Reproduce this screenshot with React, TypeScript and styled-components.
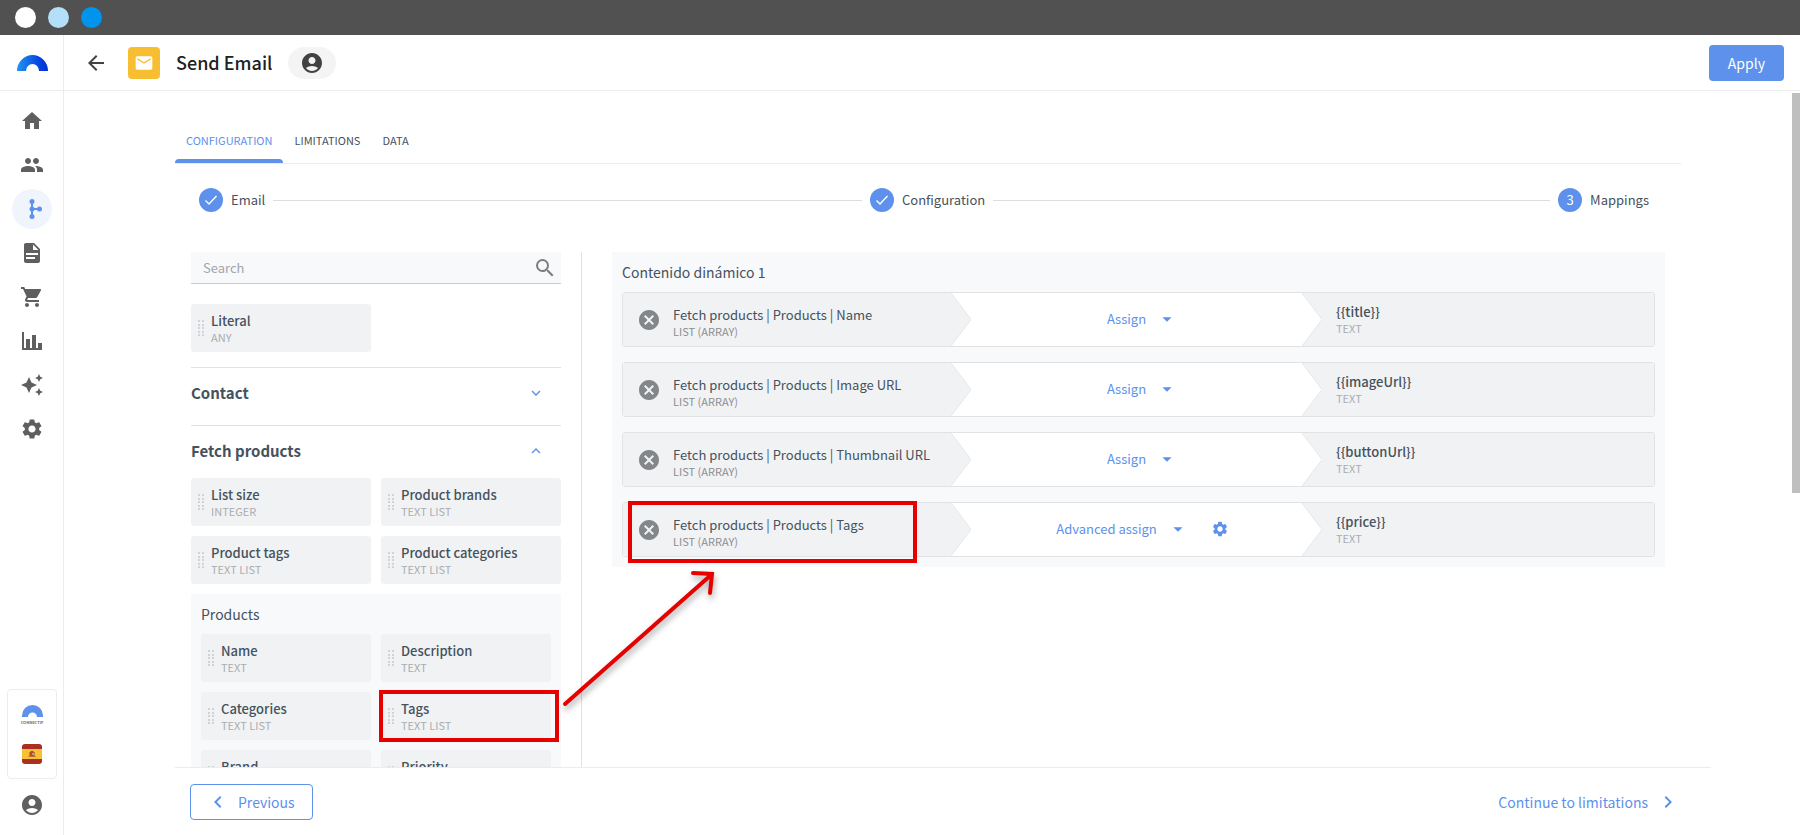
import React from "react";
import styled, { createGlobalStyle } from "styled-components";
import {
  MdAccountCircle,
  MdArrowBack,
  MdArrowDropDown,
  MdCancel,
  MdChevronLeft,
  MdChevronRight,
  MdEmail,
  MdExpandLess,
  MdExpandMore,
  MdGroup,
  MdSearch,
  MdSettings,
  MdShoppingCart,
} from "react-icons/md";

const color = {
  blue: "#5d91ec",
  ink: "#45525d",
  muted: "#a9adb1",
  line: "#e0e2e4",
  hairline: "#ececee",
  panel: "#f8f9fb",
  card: "#f1f2f4",
  mark: "#e60000",
};

const GlobalStyle = createGlobalStyle`
  *, *::before, *::after { box-sizing: border-box; }
  body {
    margin: 0;
    background: #fff;
    color: ${color.ink};
    font-family: "Noto Sans CJK SC", "Noto Sans", sans-serif;
    font-size: 13px;
    line-height: 16px;
  }
  button, input, select { font: inherit; color: inherit; }
  svg { display: block; flex: none; }
`;

const Frame = styled.div`
  display: flex;
  flex-direction: column;
  height: 100vh;
`;

const WindowBar = styled.div`
  display: flex;
  align-items: center;
  gap: 12px;
  flex: none;
  height: 35px;
  padding: 0 15px;
  background: #515151;
`;

const Dot = styled.span<{ $fill: string }>`
  width: 21px;
  height: 21px;
  border-radius: 50%;
  background: ${(p) => p.$fill};
`;

const Shell = styled.div`
  display: flex;
  flex: 1;
  min-height: 0;
`;

const Sidebar = styled.nav`
  display: flex;
  flex-direction: column;
  flex: none;
  width: 64px;
  border-right: 1px solid ${color.hairline};
`;

const Brand = styled.a`
  display: flex;
  justify-content: center;
  align-items: center;
  flex: none;
  height: 56px;
  padding-left: 2px;
  border-bottom: 1px solid ${color.hairline};
`;

const NavList = styled.ul`
  display: flex;
  flex-direction: column;
  gap: 4px;
  margin: 0 0 auto;
  padding: 10px 0 0 12px;
  list-style: none;
`;

const NavLink = styled.a<{ $active?: boolean }>`
  display: flex;
  align-items: center;
  justify-content: center;
  width: 40px;
  height: 40px;
  border-radius: 50%;
  color: ${(p) => (p.$active ? color.blue : "#5f5f5f")};
  background: ${(p) => (p.$active ? "#f0f5fd" : "transparent")};
`;

const StoreBox = styled.div`
  display: flex;
  flex-direction: column;
  align-items: center;
  width: 50px;
  height: 90px;
  margin-left: 7px;
  padding-top: 15px;
  border: 1px solid ${color.hairline};
  border-radius: 4px;
`;

const StoreName = styled.span`
  height: 25px;
  margin-top: 2px;
  color: #6b7075;
  font-size: 4px;
  font-weight: 700;
  line-height: 6px;
`;

const AccountLink = styled.a`
  display: flex;
  margin: 14px 0 18px 20px;
  color: #5f5f5f;
`;

const Page = styled.div`
  display: flex;
  flex-direction: column;
  flex: 1;
  min-width: 0;
`;

const Header = styled.header`
  display: flex;
  align-items: center;
  flex: none;
  height: 56px;
  padding: 0 16px 0 20px;
  border-bottom: 1px solid ${color.hairline};
`;

const IconButton = styled.button`
  display: flex;
  padding: 0;
  border: 0;
  background: none;
  cursor: pointer;
`;

const BackButton = styled(IconButton)`
  margin-right: 20px;
  color: #424242;
`;

const MailTile = styled.span`
  display: flex;
  align-items: center;
  justify-content: center;
  width: 32px;
  height: 32px;
  border-radius: 4px;
  background: #f8be32;
  color: #fff;
`;

const Title = styled.h1`
  margin: 0 16px;
  padding-bottom: 2px;
  color: #212121;
  font-size: 18px;
  font-weight: 500;
  line-height: 24px;
`;

const UserPill = styled.button`
  display: flex;
  align-items: center;
  justify-content: center;
  width: 48px;
  height: 32px;
  padding: 0;
  border: 0;
  border-radius: 16px;
  background: #f4f4f4;
  color: #424242;
`;

const ApplyButton = styled.button`
  height: 36px;
  margin-left: auto;
  padding: 0 19px;
  border: 0;
  border-radius: 4px;
  background: ${color.blue};
  color: #fff;
  font-size: 14px;
`;

const Body = styled.div`
  display: flex;
  flex: 1;
  min-height: 0;
`;

const Content = styled.main`
  display: flex;
  flex-direction: column;
  flex: 1;
  min-width: 0;
  padding-left: 111px;
`;

const ScrollRail = styled.div`
  flex: none;
  width: 8px;
  padding-top: 2px;
`;

const ScrollThumb = styled.div`
  height: 400px;
  background: #bfbfbf;
`;

const Tabs = styled.div`
  display: flex;
  flex: none;
  height: 73px;
  margin-right: 111px;
  padding-top: 26px;
  border-bottom: 1px solid ${color.hairline};
`;

const Tab = styled.button<{ $active?: boolean }>`
  position: relative;
  padding: 0 11px;
  border: 0;
  background: none;
  color: ${(p) => (p.$active ? color.blue : color.ink)};
  font-size: 11px;
  text-transform: uppercase;

  &::after {
    content: "";
    display: ${(p) => (p.$active ? "block" : "none")};
    position: absolute;
    left: 0;
    right: 0;
    bottom: 0;
    height: 4px;
    border-radius: 4px 4px 0 0;
    background: ${color.blue};
  }
`;

const Stepper = styled.ol`
  display: flex;
  align-items: center;
  gap: 8px;
  flex: none;
  height: 72px;
  margin: 0 111px 0 0;
  padding: 0 32px 0 24px;
  list-style: none;
`;

const Step = styled.li`
  display: flex;
  align-items: center;
  gap: 8px;
`;

const StepMark = styled.span`
  display: flex;
  align-items: center;
  justify-content: center;
  width: 24px;
  height: 24px;
  border-radius: 50%;
  background: ${color.blue};
  color: #fff;
`;

const StepLine = styled.li<{ $grow: number }>`
  flex: ${(p) => p.$grow} 1 0;
  height: 1px;
  background: #dcdddf;
`;

const Workspace = styled.div`
  position: relative;
  display: flex;
  align-items: flex-start;
  flex: 1;
  gap: 30px;
  min-height: 0;
  margin-right: 111px;
  padding: 16px 16px 0;
  overflow: hidden;
`;

const Fields = styled.aside`
  flex: none;
  align-self: stretch;
  width: 391px;
  padding-right: 20px;
  border-right: 1px solid ${color.line};
  overflow: hidden;
`;

const SearchBox = styled.label`
  display: flex;
  align-items: center;
  height: 32px;
  margin-bottom: 20px;
  padding: 0 4px 0 12px;
  border-bottom: 1px solid #c9ccd0;
  background: ${color.panel};
  color: #7b7e81;
`;

const SearchInput = styled.input`
  flex: 1;
  min-width: 0;
  height: 24px;
  padding: 0;
  border: 0;
  outline: 0;
  background: none;

  &::placeholder { color: #a3a6aa; opacity: 1; }
`;

const CardGrid = styled.div`
  display: grid;
  grid-template-columns: 1fr 1fr;
  gap: 10px;
`;

const Card = styled.div`
  position: relative;
  display: flex;
  align-items: center;
  gap: 6px;
  height: 48px;
  padding: 0 7px;
  border-radius: 3px;
  background: ${color.card};
  cursor: grab;
`;

const Name = styled.div<{ $strong?: boolean }>`
  font-size: 13px;
  font-weight: ${(p) => (p.$strong ? 500 : 400)};
  line-height: 17px;
  white-space: nowrap;
`;

const Kind = styled.div<{ $dark?: boolean }>`
  color: ${(p) => (p.$dark ? "#8b8e91" : color.muted)};
  font-size: 11px;
  line-height: 16px;
`;

const GroupHeader = styled.button<{ $open?: boolean }>`
  display: flex;
  align-items: center;
  justify-content: space-between;
  width: 100%;
  height: ${(p) => (p.$open ? 53 : 58)}px;
  margin-top: ${(p) => (p.$open ? 0 : 15)}px;
  padding: 0 0 ${(p) => (p.$open ? 2 : 7)}px;
  border: 0;
  border-top: 1px solid ${color.line};
  background: none;
  font-size: 15px;
  font-weight: 700;

  svg { margin-right: 16px; color: ${color.blue}; }
`;

const NestedGroup = styled.section`
  margin-top: 10px;
  padding: 10px;
  background: ${color.panel};
`;

const PanelTitle = styled.h2`
  margin: 0 0 10px;
  font-size: 14px;
  font-weight: 400;
  line-height: 20px;
`;

const Mappings = styled.section`
  flex: 1;
  min-width: 0;
  padding: 10px;
  background: ${color.panel};
`;

const MappingRow = styled.div`
  position: relative;
  display: grid;
  grid-template-columns: 328fr 351fr 352fr;
  height: 55px;
  border: 1px solid ${color.line};
  border-radius: 3px;
  background: #fff;

  & + & { margin-top: 15px; }
`;

const Source = styled.div`
  position: relative;
  display: flex;
  align-items: center;
  gap: 12px;
  padding-left: 14px;
  background: ${color.card};
`;

const SourceText = styled.div`
  padding-top: 6px;
`;

const RemoveButton = styled(IconButton)`
  color: #83878a;
`;

const Arrowhead = styled.svg<{ $fill: string }>`
  position: absolute;
  top: 0;
  left: 100%;
  width: 20px;
  height: 100%;
  fill: ${(p) => p.$fill};
  stroke: #e6e7e9;
  z-index: 1;
`;

const Operation = styled.div`
  position: relative;
  display: flex;
  align-items: center;
  justify-content: center;
  gap: 22px;
  padding: 0 0 2px 32px;
  color: ${color.blue};
`;

const SelectWrap = styled.span`
  position: relative;
  display: flex;
  align-items: center;

  svg {
    position: absolute;
    right: 0;
    pointer-events: none;
  }
`;

const Select = styled.select`
  appearance: none;
  field-sizing: content;
  height: 24px;
  padding: 0 32px 0 0;
  border: 0;
  background: none;
`;

const Target = styled.div`
  padding: 10px 12px 0 34px;
  background: ${color.card};
  border-radius: 0 3px 3px 0;
`;

const FieldMark = styled.span`
  position: absolute;
  inset: -2px -8px -2px -2px;
  border: 4px solid ${color.mark};
  pointer-events: none;
`;

const RowMark = styled.span`
  position: absolute;
  top: -2px;
  left: 5px;
  width: 289px;
  height: 62px;
  border: 4px solid ${color.mark};
  pointer-events: none;
  z-index: 2;
`;

const Pointer = styled.svg`
  position: absolute;
  left: 380px;
  top: 330px;
  fill: none;
  stroke: ${color.mark};
  stroke-width: 4;
  stroke-linecap: round;
  filter: drop-shadow(1px 4px 3px rgba(0, 0, 0, 0.35));
  pointer-events: none;
`;

const Footer = styled.footer`
  display: flex;
  align-items: flex-start;
  justify-content: space-between;
  flex: none;
  height: 68px;
  margin-right: 81px;
  padding: 16px 31px 0 15px;
  border-top: 1px solid ${color.hairline};
`;

const StepButton = styled.button<{ $outlined?: boolean }>`
  display: flex;
  align-items: center;
  gap: 8px;
  height: 36px;
  padding: 0 ${(p) => (p.$outlined ? 17 : 0)}px 0 ${(p) => (p.$outlined ? 15 : 0)}px;
  border: ${(p) => (p.$outlined ? `1px solid ${color.blue}` : 0)};
  border-radius: 4px;
  background: none;
  color: ${color.blue};
  font-size: 14px;
`;

type GlyphProps = { d: string };
const Glyph = ({ d }: GlyphProps) => (
  <svg width="24" height="24" viewBox="0 0 24 24" fill="currentColor">
    <path d={d} />
  </svg>
);

const BranchIcon = () => (
  <svg width="24" height="24" viewBox="0 0 24 24" fill="currentColor">
    <path d="M12 5v14M12 12h7" stroke="currentColor" strokeWidth="2" />
    <circle cx="12" cy="4.5" r="2.5" />
    <circle cx="12" cy="12" r="2.5" />
    <circle cx="12" cy="19.5" r="2.5" />
    <circle cx="19.5" cy="12" r="2.5" />
  </svg>
);

const ArchLogo = () => (
  <svg width="31" height="16" viewBox="0 0 31 16">
    <defs>
      <linearGradient id="arch" x1="0" x2="1">
        <stop offset="0" stopColor="#2196f3" />
        <stop offset="0.75" stopColor="#0341df" />
        <stop offset="1" stopColor="#0033d6" />
      </linearGradient>
    </defs>
    <path d="M0 16a15.5 16 0 0 1 31 0h-9a6.5 7 0 0 0-13 0z" fill="url(#arch)" />
  </svg>
);

const ArchSmall = () => (
  <svg width="21" height="12" viewBox="0 0 21 12">
    <path d="M0 12V10.500a10.500 10.500 0 0 1 21 0V12h-6a4.500 4.500 0 0 0-9 0z" fill={color.blue} />
  </svg>
);

const SpainFlag = () => (
  <svg width="20" height="20" viewBox="0 0 20 20">
    <rect width="20" height="20" rx="3" fill="#aa2e22" />
    <rect y="5" width="20" height="10" fill="#f6c233" />
    <path d="M7 8h1v4H7zM12 8h1v4h-1zM6 12h8v1H6z" fill="#c9812c" />
    <path d="M8 9c0-3 4-3 4 0v2c0 2-4 2-4 0z" fill="#b8452c" />
    <rect x="10" y="9" width="2" height="2" fill="#9aa4bd" />
  </svg>
);

const StepCheck = () => (
  <svg width="14" height="14" viewBox="0 0 14 14" fill="none" stroke="#fff" strokeWidth="1.4">
    <path d="M1.500 7.500L5 11L12.500 3" />
  </svg>
);

const Grip = () => (
  <svg width="7" height="17" viewBox="0 0 7 17" fill="#cfd2d6">
    {[0, 4, 7, 11, 14].map((y) => (
      <React.Fragment key={y}>
        <rect x="0" y={y} width="2" height="2" />
        <rect x="4" y={y} width="2" height="2" />
      </React.Fragment>
    ))}
  </svg>
);

const navItems = [
  { label: "Home", icon: <Glyph d="M10 20v-6h4v6h5v-8h3L12 3 2 12h3v8z" /> },
  { label: "Contacts", icon: <MdGroup size={24} /> },
  { label: "Workflows", icon: <BranchIcon />, active: true },
  {
    label: "Content",
    icon: (
      <Glyph d="M13 9h5.500L13 3.500V9M6 2h8l6 6v12a2 2 0 0 1-2 2H6a2 2 0 0 1-2-2V4c0-1.110.890-2 2-2m9 16v-2H6v2h9m3-4v-2H6v2h12z" />
    ),
  },
  { label: "Store", icon: <MdShoppingCart size={24} /> },
  { label: "Reports", icon: <Glyph d="M22 21H2V3h2v16h2v-9h4v9h2V6h4v13h2v-5h4v7z" /> },
  {
    label: "Assistant",
    icon: (
      <Glyph d="M19 1l-1.260 2.750L15 5l2.740 1.260L19 9l1.250-2.740L23 5l-2.750-1.250M9 4L6.500 9.500 1 12l5.500 2.500L9 20l2.500-5.500L17 12l-5.500-2.500M19 15l-1.260 2.740L15 19l2.740 1.250L19 23l1.250-2.750L23 19l-2.750-1.260" />
    ),
  },
  { label: "Settings", icon: <MdSettings size={24} /> },
];

type Field = { name: string; kind: string; marked?: boolean };

const fetchFields: Field[] = [
  { name: "List size", kind: "INTEGER" },
  { name: "Product brands", kind: "TEXT LIST" },
  { name: "Product tags", kind: "TEXT LIST" },
  { name: "Product categories", kind: "TEXT LIST" },
];

const productFields: Field[] = [
  { name: "Name", kind: "TEXT" },
  { name: "Description", kind: "TEXT" },
  { name: "Categories", kind: "TEXT LIST" },
  { name: "Tags", kind: "TEXT LIST", marked: true },
  { name: "Brand", kind: "TEXT" },
  { name: "Priority", kind: "INTEGER" },
];

const mappings = [
  { source: "Name", mode: "Assign", target: "{{title}}" },
  { source: "Image URL", mode: "Assign", target: "{{imageUrl}}" },
  { source: "Thumbnail URL", mode: "Assign", target: "{{buttonUrl}}" },
  { source: "Tags", mode: "Advanced assign", target: "{{price}}", marked: true },
];

const FieldCard = ({ name, kind, marked }: Field) => (
  <Card>
    <Grip />
    <div>
      <Name $strong>{name}</Name>
      <Kind>{kind}</Kind>
    </div>
    {marked && <FieldMark />}
  </Card>
);

const Head = ({ fill }: { fill: string }) => (
  <Arrowhead $fill={fill} viewBox="0 0 20 53" preserveAspectRatio="none">
    <path d="M0 0L20 26.500L0 53" />
  </Arrowhead>
);

export default function App() {
  return (
    <Frame>
      <GlobalStyle />
      <WindowBar>
        <Dot $fill="#ffffff" />
        <Dot $fill="#b3dff9" />
        <Dot $fill="#0094ec" />
      </WindowBar>
      <Shell>
        <Sidebar aria-label="Main">
          <Brand href="#" aria-label="Connectif">
            <ArchLogo />
          </Brand>
          <NavList>
            {navItems.map((item) => (
              <li key={item.label}>
                <NavLink href="#" aria-label={item.label} $active={item.active}>
                  {item.icon}
                </NavLink>
              </li>
            ))}
          </NavList>
          <StoreBox>
            <ArchSmall />
            <StoreName>CONNECTIF</StoreName>
            <SpainFlag />
          </StoreBox>
          <AccountLink href="#" aria-label="Account">
            <MdAccountCircle size={24} />
          </AccountLink>
        </Sidebar>
        <Page>
          <Header>
            <BackButton aria-label="Back">
              <MdArrowBack size={24} />
            </BackButton>
            <MailTile>
              <MdEmail size={20} />
            </MailTile>
            <Title>Send Email</Title>
            <UserPill aria-label="Contact">
              <MdAccountCircle size={24} />
            </UserPill>
            <ApplyButton>Apply</ApplyButton>
          </Header>
          <Body>
            <Content>
              <Tabs role="tablist">
                <Tab role="tab" aria-selected $active>
                  Configuration
                </Tab>
                <Tab role="tab">Limitations</Tab>
                <Tab role="tab">Data</Tab>
              </Tabs>
              <Stepper>
                <Step>
                  <StepMark>
                    <StepCheck />
                  </StepMark>
                  Email
                </Step>
                <StepLine $grow={37} aria-hidden />
                <Step>
                  <StepMark>
                    <StepCheck />
                  </StepMark>
                  Configuration
                </Step>
                <StepLine $grow={35} aria-hidden />
                <Step>
                  <StepMark>3</StepMark>
                  Mappings
                </Step>
              </Stepper>
              <Workspace>
                <Fields>
                  <SearchBox>
                    <SearchInput type="text" placeholder="Search" aria-label="Search" />
                    <MdSearch size={24} />
                  </SearchBox>
                  <CardGrid>
                    <FieldCard name="Literal" kind="ANY" />
                  </CardGrid>
                  <GroupHeader aria-expanded={false}>
                    Contact
                    <MdExpandMore size={18} />
                  </GroupHeader>
                  <GroupHeader aria-expanded $open>
                    Fetch products
                    <MdExpandLess size={18} />
                  </GroupHeader>
                  <CardGrid>
                    {fetchFields.map((f) => (
                      <FieldCard key={f.name} {...f} />
                    ))}
                  </CardGrid>
                  <NestedGroup>
                    <PanelTitle>Products</PanelTitle>
                    <CardGrid>
                      {productFields.map((f) => (
                        <FieldCard key={f.name} {...f} />
                      ))}
                    </CardGrid>
                  </NestedGroup>
                </Fields>
                <Mappings>
                  <PanelTitle>Contenido dinámico 1</PanelTitle>
                  {mappings.map((m) => (
                    <MappingRow key={m.target}>
                      <Source>
                        <RemoveButton aria-label="Remove">
                          <MdCancel size={24} />
                        </RemoveButton>
                        <SourceText>
                          <Name>Fetch products | Products | {m.source}</Name>
                          <Kind $dark>LIST (ARRAY)</Kind>
                        </SourceText>
                        <Head fill={color.card} />
                      </Source>
                      <Operation>
                        <SelectWrap>
                          <Select aria-label={`Operation for ${m.target}`} defaultValue={m.mode}>
                            <option>{m.mode}</option>
                          </Select>
                          <MdArrowDropDown size={22} />
                        </SelectWrap>
                        {m.marked && (
                          <IconButton aria-label="Assign settings">
                            <MdSettings size={18} />
                          </IconButton>
                        )}
                        <Head fill="#fff" />
                      </Operation>
                      <Target>
                        <Name $strong>{m.target}</Name>
                        <Kind>TEXT</Kind>
                      </Target>
                      {m.marked && <RowMark />}
                    </MappingRow>
                  ))}
                </Mappings>
                <Pointer width="170" height="150" viewBox="0 0 170 150">
                  <path d="M10 138L156 9M138 7L157 8L155 27" />
                </Pointer>
              </Workspace>
              <Footer>
                <StepButton $outlined>
                  <MdChevronLeft size={24} />
                  Previous
                </StepButton>
                <StepButton>
                  Continue to limitations
                  <MdChevronRight size={24} />
                </StepButton>
              </Footer>
            </Content>
            <ScrollRail>
              <ScrollThumb />
            </ScrollRail>
          </Body>
        </Page>
      </Shell>
    </Frame>
  );
}
